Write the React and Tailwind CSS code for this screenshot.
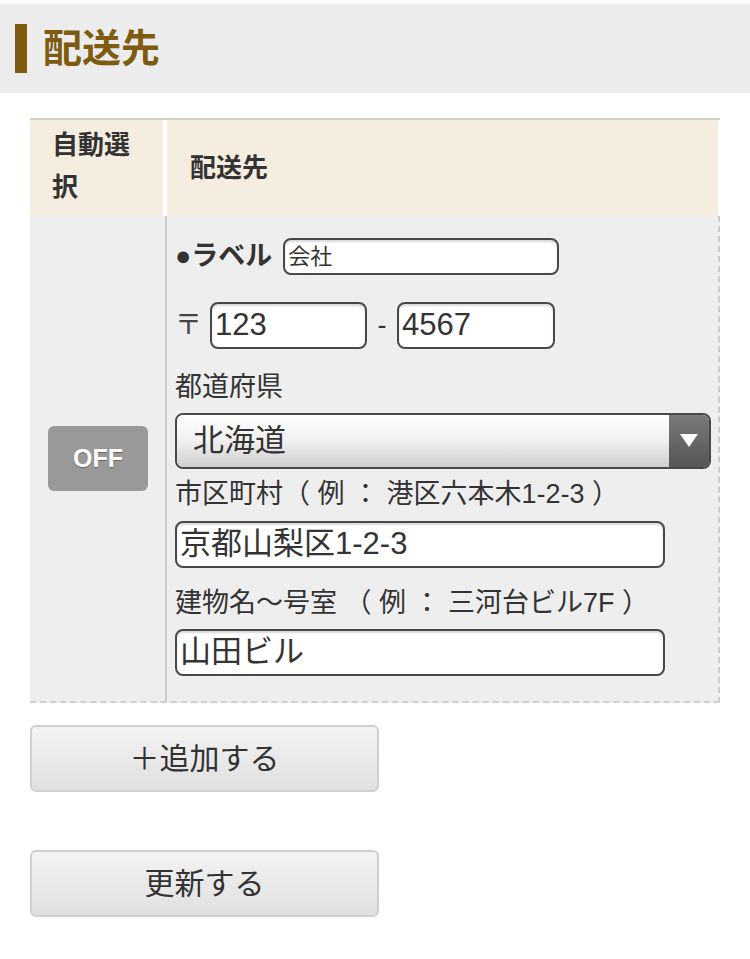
const font = "font-['Liberation_Sans','Noto_Sans_CJK_JP',sans-serif]";

const Field = ({ value, className = '', textClass = 'text-[31px]' }) => (
  <div
    className={`flex items-center bg-white border-2 border-[#484848] rounded-[8px] shadow-[inset_0_2px_2px_rgba(0,0,0,0.15)] pl-[3px] text-[#333] overflow-hidden whitespace-nowrap ${textClass} ${className}`}
  >
    {value}
  </div>
);

export default function App() {
  return (
    <div className={`w-[750px] min-h-[959px] bg-white text-[#333] ${font}`}>
      <div className="mt-[4px] h-[89px] bg-[#ececec] flex items-center pl-[15px]">
        <div className="w-[12px] h-[49px] bg-[#7d5b10]" />
        <h1 className="ml-[16px] text-[39px] font-bold text-[#7d5b10] leading-none">配送先</h1>
      </div>

      <div className="ml-[30px] mt-[25px] w-[690px]">
        <div className="flex border-t-2 border-[#d6d1c6] h-[98px]">
          <div className="w-[133px] bg-[#f5eddf] pl-[22px] pt-[4px] text-[26px] font-bold leading-[42px] text-[#333]">
            自動選<br />択
          </div>
          <div className="w-[4px] bg-white" />
          <div className="flex-1 bg-[#f5eddf] flex items-center pl-[23px] text-[26px] font-bold mr-[2px]">配送先</div>
        </div>

        <div className="flex bg-[#eeeeee] border-b-2 border-dashed border-[#cfcfcf] border-r-2 border-r-[#cccccc]">
          <div className="w-[137px] border-r-2 border-[#cccccc] flex items-center justify-center pl-[1px]">
            <div className="w-[100px] h-[65px] bg-[#999999] rounded-[6px] flex items-center justify-center text-white text-[25px] font-bold [text-shadow:0_1px_1px_rgba(0,0,0,0.35)]">
              OFF
            </div>
          </div>

          <div className="flex-1 pl-[8px] pt-[22px] pb-[25px]">
            <div className="flex items-center h-[37px]">
              <span className="text-[27px] font-bold text-[#333]">●ラベル</span>
              <Field value="会社" textClass="text-[22px]" className="ml-[11px] w-[276px] h-[37px]" />
            </div>

            <div className="flex items-center mt-[27px] h-[47px]">
              <span className="text-[27px] text-[#444] w-[35px]">〒</span>
              <Field value="123" className="w-[157px] h-[47px]" />
              <span className="text-[27px] w-[30px] text-center">-</span>
              <Field value="4567" className="w-[158px] h-[47px]" />
            </div>

            <div className="mt-[20px] h-[36px] leading-[36px] text-[27px] text-[#333]">都道府県</div>

            <div className="mt-[8px] w-[536px] h-[56px] flex rounded-[8px] border-2 border-[#484848] overflow-hidden">
              <div className="flex-1 flex items-center pl-[16px] text-[31px] text-[#333] bg-gradient-to-b from-[#ffffff] via-[#f0f0f0] to-[#cfcfcf]">
                北海道
              </div>
              <div className="w-[40px] flex items-center justify-center bg-gradient-to-b from-[#7a7a7a] to-[#555555]">
                <svg width="18" height="14" viewBox="0 0 18 14">
                  <polygon points="0,0 18,0 9,13" fill="#ffffff" />
                </svg>
              </div>
            </div>

            <div className="mt-[7px] h-[36px] leading-[36px] text-[27px] text-[#333] whitespace-nowrap">
              市区町村（ 例 ： 港区六本木1-2-3 ）
            </div>
            <Field value="京都山梨区1-2-3" className="mt-[9px] w-[490px] h-[47px]" />

            <div className="mt-[17px] h-[36px] leading-[36px] text-[27px] text-[#333] whitespace-nowrap">
              建物名～号室 （ 例 ： 三河台ビル7F ）
            </div>
            <Field value="山田ビル" className="mt-[8px] w-[490px] h-[47px]" />
          </div>
        </div>
      </div>

      <div className="ml-[30px] mt-[22px] flex flex-col gap-[58px]">
        <button className="w-[349px] h-[67px] rounded-[6px] border-2 border-[#d0d0d0] bg-gradient-to-b from-[#f3f3f3] to-[#e0e0e0] text-[30px] text-[#333]">
          ＋追加する
        </button>
        <button className="w-[349px] h-[67px] rounded-[6px] border-2 border-[#d0d0d0] bg-gradient-to-b from-[#f3f3f3] to-[#e0e0e0] text-[30px] text-[#333]">
          更新する
        </button>
      </div>
    </div>
  );
}
